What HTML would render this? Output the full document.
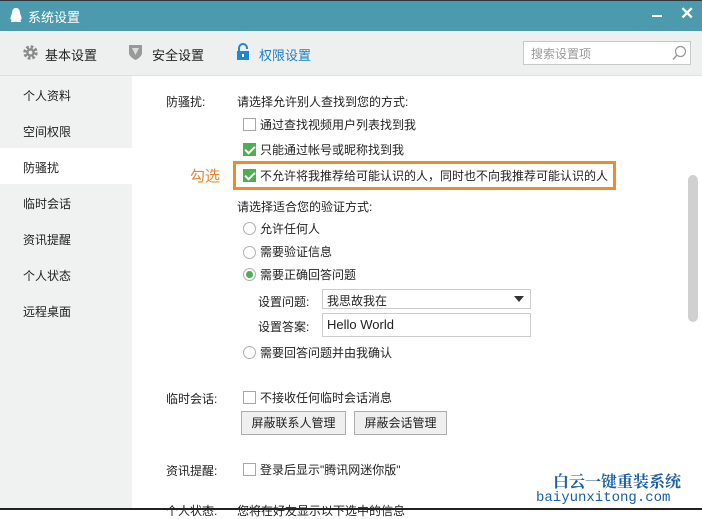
<!DOCTYPE html>
<html><head><meta charset="utf-8"><style>
*{margin:0;padding:0;box-sizing:border-box}
body{width:702px;height:510px;overflow:hidden;background:#fff;font-family:"Liberation Sans","Microsoft YaHei","Noto Sans CJK SC",sans-serif;font-size:12px;color:#222;position:relative}
.a{position:absolute;white-space:nowrap}
.title{left:0;top:0;width:702px;height:31px;background:#4b9aae;border-top:1px solid #2c3a40}
.tool{left:0;top:31px;width:702px;height:45px;background:#eef0f0;border-bottom:1px solid #dde0e0}
.side{left:0;top:76px;width:132px;height:434px;background:#f0f1f1}
.cb{position:absolute;width:13px;height:13px;border:1px solid #a8a8a8;background:#fff}
.cb.on{background:#4caf50;border-color:#4caf50}
.cb.on:after{content:"";position:absolute;left:3px;top:0px;width:4px;height:8px;border:solid #fff;border-width:0 2px 2px 0;transform:rotate(45deg)}
.rb{position:absolute;width:13px;height:13px;border:1px solid #b0b0b0;border-radius:50%;background:#fff}
.rb.on:after{content:"";position:absolute;left:2px;top:2px;width:7px;height:7px;border-radius:50%;background:#4caf50}
.btn{position:absolute;height:24px;border:1px solid #adadad;background:#efefef;font-size:12px;text-align:center;line-height:22px}
.si{left:23px;font-size:12px}
</style></head><body>
<div class="a title"></div>
<svg class="a" style="left:9px;top:7px" width="14" height="17" viewBox="0 0 14 17"><path d="M7 1C4 1 3 3.5 3 6 L2 9 C1 11 1.5 12.5 2.5 13 L2 15 H6 L7 14.5 L8 15 H12 L11.5 13 C12.5 12.5 13 11 12 9 L11 6 C11 3.5 10 1 7 1Z" fill="#fff"/></svg>
<div class="a" style="left:28px;top:7px;color:#fff;font-size:13px">系统设置</div>
<div class="a" style="left:652px;top:15px;width:10px;height:2px;background:#fff"></div>
<div class="a" style="left:680px;top:4px;color:#fff;font-size:17px;font-weight:bold">✕</div>
<div class="a tool"></div>
<svg class="a" style="left:22px;top:44px" width="17" height="17" viewBox="0 0 20 20"><circle cx="10" cy="10" r="6.5" fill="none" stroke="#8a8a8a" stroke-width="4" stroke-dasharray="3 2.1"/><circle cx="10" cy="10" r="5" fill="#8a8a8a"/><circle cx="10" cy="10" r="2.2" fill="#eef0f0"/></svg>
<div class="a" style="left:45px;top:45px;font-size:13px">基本设置</div>
<svg class="a" style="left:128px;top:44px" width="15" height="17" viewBox="0 0 15 17"><path d="M1 1H14V9C14 13 7.5 16 7.5 16S1 13 1 9Z" fill="#999"/><path d="M4 4H11L7.5 11Z" fill="#ddd"/></svg>
<div class="a" style="left:152px;top:45px;font-size:13px">安全设置</div>
<svg class="a" style="left:236px;top:43px" width="14" height="18" viewBox="0 0 14 18"><path d="M3 8V5A4 4 0 0 1 11 5V6" fill="none" stroke="#1e88d0" stroke-width="2"/><rect x="1" y="8" width="12" height="9" fill="#1e88d0"/><rect x="6" y="11" width="2" height="3" fill="#fff"/></svg>
<div class="a" style="left:259px;top:45px;font-size:13px;color:#1e7fc8">权限设置</div>
<div class="a" style="left:523px;top:41px;width:168px;height:24px;border:1px solid #c8c8c8;background:#fff"></div>
<div class="a" style="left:531px;top:45px;color:#999">搜索设置项</div>
<svg class="a" style="left:671px;top:45px" width="16" height="16" viewBox="0 0 16 16"><circle cx="9.5" cy="6.5" r="5" fill="none" stroke="#999" stroke-width="1.2"/><path d="M6 10L2 14.5" stroke="#999" stroke-width="1.5"/></svg>
<div class="a side"></div>
<div class="a" style="left:0;top:148px;width:132px;height:36px;background:#fff"></div>
<div class="a si" style="top:87px">个人资料</div>
<div class="a si" style="top:123px">空间权限</div>
<div class="a si" style="top:159px">防骚扰</div>
<div class="a si" style="top:195px">临时会话</div>
<div class="a si" style="top:231px">资讯提醒</div>
<div class="a si" style="top:267px">个人状态</div>
<div class="a si" style="top:303px">远程桌面</div>

<div class="a" style="left:166px;top:93px">防骚扰:</div>
<div class="a" style="left:237px;top:93px">请选择允许别人查找到您的方式:</div>
<div class="cb" style="left:243px;top:118px"></div><div class="a" style="left:260px;top:116px">通过查找视频用户列表找到我</div>
<div class="cb on" style="left:243px;top:143px"></div><div class="a" style="left:260px;top:141px">只能通过帐号或昵称找到我</div>
<div class="a" style="left:190px;top:165px;color:#e9862f;font-size:15px">勾选</div>
<div class="a" style="left:233px;top:161px;width:383px;height:29px;border:3px solid #ef8a30"></div>
<div class="cb on" style="left:243px;top:169px"></div><div class="a" style="left:260px;top:167px">不允许将我推荐给可能认识的人，同时也不向我推荐可能认识的人</div>
<div class="a" style="left:237px;top:198px">请选择适合您的验证方式:</div>
<div class="rb" style="left:243px;top:222px"></div><div class="a" style="left:260px;top:220px">允许任何人</div>
<div class="rb" style="left:243px;top:246px"></div><div class="a" style="left:260px;top:243px">需要验证信息</div>
<div class="rb on" style="left:243px;top:268px"></div><div class="a" style="left:260px;top:266px">需要正确回答问题</div>
<div class="a" style="left:258px;top:293px">设置问题:</div>
<div class="a" style="left:322px;top:289px;width:209px;height:20px;border:1px solid #ccc"></div>
<div class="a" style="left:327px;top:292px">我思故我在</div>
<div class="a" style="left:514px;top:296px;border:5px solid transparent;border-top:6px solid #333;border-bottom:0"></div>
<div class="a" style="left:258px;top:318px">设置答案:</div>
<div class="a" style="left:322px;top:313px;width:209px;height:24px;border:1px solid #ccc"></div>
<div class="a" style="left:327px;top:317px;font-size:13px">Hello World</div>
<div class="rb" style="left:243px;top:346px"></div><div class="a" style="left:260px;top:344px">需要回答问题并由我确认</div>
<div class="a" style="left:166px;top:390px">临时会话:</div>
<div class="cb" style="left:243px;top:391px"></div><div class="a" style="left:260px;top:389px">不接收任何临时会话消息</div>
<div class="btn" style="left:241px;top:411px;width:105px">屏蔽联系人管理</div>
<div class="btn" style="left:354px;top:411px;width:93px">屏蔽会话管理</div>
<div class="a" style="left:166px;top:462px">资讯提醒:</div>
<div class="cb" style="left:243px;top:463px"></div><div class="a" style="left:260px;top:461px">登录后显示"腾讯网迷你版"</div>
<div class="a" style="left:166px;top:502px">个人状态:</div><div class="a" style="left:237px;top:502px">您将在好友显示以下选中的信息</div>
<div class="a" style="left:688px;top:175px;width:10px;height:147px;background:#d0d0d0;border-radius:5px"></div>
<div class="a" style="left:553px;top:469px;color:#1a5ea8;font-size:16px;font-weight:bold;font-family:'Noto Serif CJK SC',serif">白云一键重装系统</div>
<div class="a" style="left:536px;top:490px;color:#1a5ea8;font-size:14px;font-family:'Liberation Mono',monospace">baiyunxitong.com</div>
<div class="a" style="left:0;top:508px;width:702px;height:2px;background:#222"></div>
</body></html>
